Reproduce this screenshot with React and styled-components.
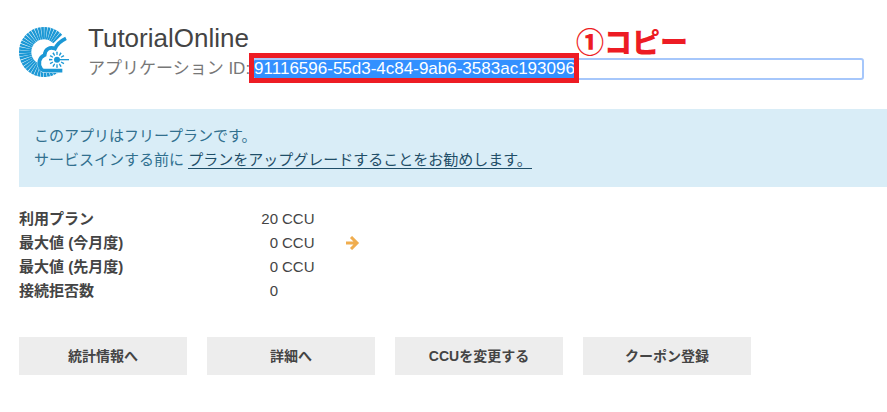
import { useEffect, useRef } from 'react';
import { styled, createGlobalStyle } from 'styled-components';

const GlobalStyle = createGlobalStyle`
  * {
    box-sizing: border-box;
  }

  body {
    margin: 0;
    background-color: #fff;
    color: #444;
    font-family: "Liberation Sans", "Noto Sans CJK JP", sans-serif;
    font-size: 15px;
    line-height: 24px;
  }
`;

const Page = styled.main`
  padding: 24px 0 24px 19px;
`;

const Header = styled.header`
  display: flex;
  gap: 19px;
  padding-right: 23px;
`;

const Logo = styled.svg`
  flex: none;
  width: 50px;
  height: 50px;
  margin-top: 3px;
`;

const HeaderText = styled.div`
  flex: 1;
  min-width: 0;
`;

const Title = styled.h1`
  margin: 0;
  font-size: 26px;
  font-weight: normal;
  line-height: 28px;
`;

const IdRow = styled.div`
  display: flex;
  align-items: center;
  gap: 2px;
  margin-top: 6px;
  font-size: 17px;
  line-height: 22px;
`;

const IdLabel = styled.label`
  flex: none;
  color: #777;
`;

const IdField = styled.div`
  position: relative;
  flex: 1;
  display: flex;
`;

const IdInput = styled.input`
  width: 100%;
  height: 22px;
  padding: 0;
  border: 2px solid #a6c7fb;
  border-radius: 3px;
  outline: none;
  color: #444;
  font-family: inherit;
  font-size: 17px;

  &::selection {
    background-color: #3390ff;
    color: #fff;
  }
`;

const Highlight = styled.div`
  position: absolute;
  top: -5px;
  left: -3px;
  width: 330px;
  height: 30px;
  border: 5px solid #ed1c24;
  pointer-events: none;
`;

const Note = styled.span`
  position: absolute;
  top: -29px;
  left: 324px;
  color: #ed1c24;
  font-size: 28px;
  font-weight: 900;
  line-height: 30px;
  white-space: nowrap;
`;

const Notice = styled.section`
  margin-top: 29px;
  padding: 15px;
  background-color: #d9edf7;
  color: #31708f;

  p {
    margin: 0;
  }
`;

const NoticeLink = styled.a`
  display: inline-block;
  border-bottom: 1px solid #1f4e68;
  color: #1f4e68;
  line-height: 17px;
  text-decoration: none;
`;

const Stats = styled.table`
  margin-top: 20px;
  border-collapse: collapse;

  th,
  td {
    padding: 0;
    text-align: left;
  }
`;

const StatName = styled.th`
  width: 240px;
`;

const StatValue = styled.td`
  && {
    width: 19px;
    text-align: right;
  }
`;

const StatUnit = styled.td`
  && {
    width: 68px;
    padding-left: 4px;
  }
`;

const Arrow = styled.svg`
  display: block;
  width: 14px;
  height: 14px;
  fill: none;
  stroke: #f0ad4e;
  stroke-width: 3;
`;

const Actions = styled.div`
  display: flex;
  flex-wrap: wrap;
  gap: 20px;
  margin-top: 34px;
`;

const ActionButton = styled.button`
  width: 168px;
  height: 38px;
  padding: 0 0 2px;
  border: none;
  background-color: #ededed;
  color: #444;
  font-family: inherit;
  font-size: 14px;
  font-weight: bold;
  cursor: pointer;
`;

const stats = [
  { name: '利用プラン', value: 20, unit: 'CCU' },
  { name: '最大値 (今月度)', value: 0, unit: 'CCU', arrow: true },
  { name: '最大値 (先月度)', value: 0, unit: 'CCU' },
  { name: '接続拒否数', value: 0, unit: '' },
];

const actions = ['統計情報へ', '詳細へ', 'CCUを変更する', 'クーポン登録'];

// tapered rays of the outer ring, leaving the right side open
const ringRays = Array.from({ length: 35 }, (_, i) => 48 + i * 7.8);
const sunRays = Array.from({ length: 11 }, (_, i) => (i + 1) * 30);

function PhotonLogo() {
  return (
    <Logo viewBox="0 0 150 150" fill="#1b98d5" aria-hidden="true">
      {ringRays.map((angle) => (
        <path
          key={angle}
          d="M113 72.6 L150 70.8 V79.2 L113 77.4 Z"
          transform={`rotate(${angle} 75 75)`}
        />
      ))}
      <path
        d="M139 35 C124 42 114 52 108 65 C93 58 78 66 77 84 C61 90 55 110 67 127 Q72 132 79 132 H132 L150 98 Z"
        fill="#fff"
        stroke="#fff"
        strokeWidth="12"
      />
      <path
        d="M141 34 C124 42 114 52 108 65 C93 58 78 66 77 84 C61 90 55 110 67 127 Q72 131 79 131 H130"
        fill="none"
        stroke="#1b98d5"
        strokeWidth="11"
      />
      <circle cx="114" cy="98" r="9" />
      <path d="M114 96 H150 V100 H114 Z" />
      {sunRays.map((angle) => (
        <path
          key={angle}
          d="M128 96.3 L138 95.6 V100.4 L128 99.7 Z"
          transform={`rotate(${angle} 114 98)`}
        />
      ))}
    </Logo>
  );
}

export default function App() {
  const inputRef = useRef(null);

  useEffect(() => {
    inputRef.current.focus();
    inputRef.current.select();
  }, []);

  return (
    <Page>
      <GlobalStyle />
      <Header>
        <PhotonLogo />
        <HeaderText>
          <Title>TutorialOnline</Title>
          <IdRow>
            <IdLabel htmlFor="app-id">アプリケーション ID:</IdLabel>
            <IdField>
              <IdInput
                id="app-id"
                ref={inputRef}
                defaultValue="91116596-55d3-4c84-9ab6-3583ac193096"
                readOnly
              />
              <Highlight />
              <Note>①コピー</Note>
            </IdField>
          </IdRow>
        </HeaderText>
      </Header>

      <Notice>
        <p>このアプリはフリープランです。</p>
        <p>
          サービスインする前に{' '}
          <NoticeLink href="#upgrade">プランをアップグレードすることをお勧めします。</NoticeLink>
        </p>
      </Notice>

      <Stats>
        <tbody>
          {stats.map((stat) => (
            <tr key={stat.name}>
              <StatName scope="row">{stat.name}</StatName>
              <StatValue>{stat.value}</StatValue>
              <StatUnit>{stat.unit}</StatUnit>
              <td>
                {stat.arrow && (
                  <Arrow viewBox="0 0 14 14" aria-hidden="true">
                    <path d="M0 7 H11 M5 1 L11 7 L5 13" />
                  </Arrow>
                )}
              </td>
            </tr>
          ))}
        </tbody>
      </Stats>

      <Actions>
        {actions.map((label) => (
          <ActionButton key={label} type="button">{label}</ActionButton>
        ))}
      </Actions>
    </Page>
  );
}
